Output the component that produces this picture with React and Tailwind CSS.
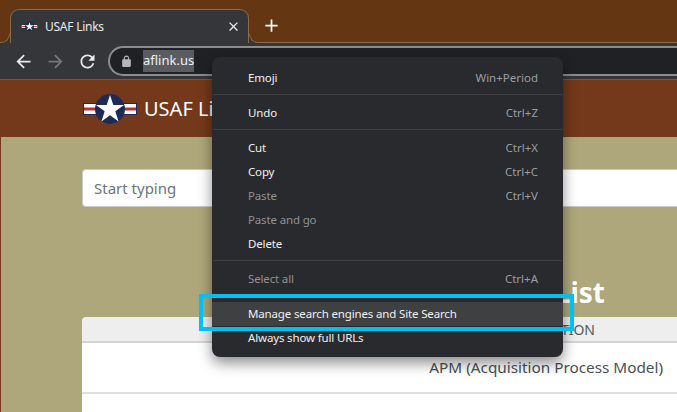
const font = { fontFamily: '"Noto Sans", "Open Sans", sans-serif' };

function Roundel({ className }) {
  return (
    <svg viewBox="0 0 54 30" className={className}>
      <rect x="0" y="9" width="54" height="12" fill="#1f2a56" />
      <rect x="1" y="10" width="52" height="10" fill="#ffffff" />
      <rect x="1" y="13.5" width="52" height="3" fill="#b5322e" />
      <circle cx="27" cy="15" r="15" fill="#1f2a56" />
      <polygon
        fill="#ffffff"
        points="27,1 30.3,11 41,11 32.3,17.3 35.6,27.5 27,21.2 18.4,27.5 21.7,17.3 13,11 23.7,11"
      />
    </svg>
  );
}

function Icon({ d, className }) {
  return (
    <svg viewBox="0 0 24 24" className={className} fill="currentColor">
      <path d={d} />
    </svg>
  );
}

const BACK = "M20 11H7.83l5.59-5.59L12 4l-8 8 8 8 1.41-1.41L7.83 13H20v-2z";
const FORWARD = "M4 11h12.17l-5.59-5.59L12 4l8 8-8 8-1.41-1.41L16.17 13H4v-2z";
const RELOAD =
  "M17.65 6.35A7.958 7.958 0 0 0 12 4c-4.42 0-7.99 3.58-7.99 8s3.57 8 7.99 8c3.73 0 6.84-2.55 7.73-6h-2.08A5.99 5.99 0 0 1 12 18c-3.31 0-6-2.69-6-6s2.69-6 6-6c1.66 0 3.14.69 4.22 1.78L13 11h7V4l-2.35 2.35z";
const LOCK =
  "M18 8h-1V6c0-2.76-2.24-5-5-5S7 3.24 7 6v2H6c-1.1 0-2 .9-2 2v10c0 1.1.9 2 2 2h12c1.1 0 2-.9 2-2V10c0-1.1-.9-2-2-2zM9 6c0-1.66 1.34-3 3-3s3 1.34 3 3v2H9V6z";
const CLOSE =
  "M19 6.41 17.59 5 12 10.59 6.41 5 5 6.41 10.59 12 5 17.59 6.41 19 12 13.41 17.59 19 19 17.59 13.41 12z";
const PLUS = "M19 13h-6v6h-2v-6H5v-2h6V5h2v6h6v2z";

function Item({ label, shortcut, dim, hover }) {
  return (
    <div
      className={
        "flex h-6 items-center justify-between pl-9 pr-[25px] text-[11.5px] " +
        (hover ? "bg-[#3f4042] " : "")
      }
    >
      <span className={"tracking-[-0.15px] " + (dim ? "text-[#8f9194]" : "text-[#eef0f2]")}>
        {label}
      </span>
      {shortcut ? <span className="text-[#9a9ea3]">{shortcut}</span> : null}
    </div>
  );
}

function Sep() {
  return <div className="mx-[1px] mb-[6px] mt-[4px] h-px bg-[#3f4043]" />;
}

export default function App() {
  return (
    <div className="relative h-[412px] w-[677px] overflow-hidden bg-[#aea77b]" style={font}>
      {/* Tab strip */}
      <div className="flex h-[43px] items-end border-b border-[#8a6a48] bg-[#643612] pl-[10px]">
        <div className="relative -mb-px flex h-[34px] w-[239px] items-center rounded-t-[9px] border border-b-0 border-[#8a6a48] bg-[#35363a] pl-[10px] pr-[7px]">
          <div className="absolute -left-[11px] bottom-0 h-[9px] w-[10px] bg-[#35363a]">
            <div className="h-full w-full rounded-br-[9px] border-b border-r border-[#8a6a48] bg-[#643612]" />
          </div>
          <div className="absolute -right-[11px] bottom-0 h-[9px] w-[10px] bg-[#35363a]">
            <div className="h-full w-full rounded-bl-[9px] border-b border-l border-[#8a6a48] bg-[#643612]" />
          </div>
          <Roundel className="h-[9px] w-[17px] shrink-0" />
          <span className="ml-[7px] text-[12px] tracking-[-0.25px] text-[#e8eaed]">USAF Links</span>
          <Icon d={CLOSE} className="ml-auto h-[15px] w-[15px] text-[#e8eaed]" />
        </div>
        <div className="mb-[6px] ml-[12px] flex h-[21px] w-[21px] items-center justify-center text-white">
          <Icon d={PLUS} className="h-[21px] w-[21px]" />
        </div>
      </div>

      {/* Toolbar */}
      <div className="flex h-[37px] items-center border-b border-[#6d5a48] bg-[#35363a] pl-[13px]">
        <Icon d={BACK} className="h-[21px] w-[21px] text-[#e8eaed]" />
        <Icon d={FORWARD} className="ml-[11px] h-[21px] w-[21px] text-[#75777b]" />
        <Icon d={RELOAD} className="ml-[11px] h-[21px] w-[21px] text-[#e8eaed]" />
        <div className="ml-[10px] flex h-[30px] flex-1 items-center rounded-l-full border-2 border-r-0 border-[#8a8c90] bg-[#202124] pl-[10px]">
          <Icon d={LOCK} className="h-[13px] w-[13px] text-[#b5b7ba]" />
          <span className="ml-[10px] flex h-[22px] items-center bg-[#5a5c60] text-[13px] text-[#eef0f2]">
            aflink.us
          </span>
        </div>
      </div>

      {/* Site header */}
      <div className="flex h-[57px] items-center bg-[#74391b] pl-[83px]">
        <Roundel className="h-[30px] w-[54px] shrink-0" />
        <span className="ml-[7px] text-[20px] text-white">USAF Links</span>
      </div>

      {/* Page body */}
      <div className="border-l border-[#74391b] pl-[81px] pt-[32px]">
        <div className="flex h-[38px] items-center rounded-l border border-r-0 border-[#c9c9c9] bg-white pl-[11px] pt-px text-[15px] text-[#6c757d]">
          Start typing
        </div>
        <div className="flex h-[110px] items-end justify-end pb-[11px] pr-[72px] text-[28px] font-bold leading-none text-white">
          Link List
        </div>
        <div className="flex h-[26px] items-center justify-end rounded-tl border-b-2 border-[#d4d4d4] bg-[#eeeeee] pr-[82px] text-[14px] text-[#555b61]">
          DESCRIPTION
        </div>
        <div className="flex h-[51px] items-center justify-end border-b-2 border-[#dfdfdf] bg-white pr-[14px] text-[15.3px] text-[#495057]">
          APM (Acquisition Process Model)
        </div>
        <div className="h-[40px] bg-white" />
      </div>

      {/* Context menu */}
      <div className="absolute left-[212px] top-[57px] w-[351px] rounded-lg bg-[#292a2d] pb-[7px] pt-[9px] shadow-[0_6px_14px_rgba(0,0,0,0.45)]">
        <Item label="Emoji" shortcut="Win+Period" />
        <Sep />
        <Item label="Undo" shortcut="Ctrl+Z" />
        <Sep />
        <Item label="Cut" shortcut="Ctrl+X" />
        <Item label="Copy" shortcut="Ctrl+C" />
        <Item label="Paste" shortcut="Ctrl+V" dim />
        <Item label="Paste and go" dim />
        <Item label="Delete" />
        <Sep />
        <Item label="Select all" shortcut="Ctrl+A" dim />
        <Sep />
        <Item label="Manage search engines and Site Search" hover />
        <Item label="Always show full URLs" />
      </div>

      {/* Annotation box */}
      <div className="absolute left-[199px] top-[294px] h-[37px] w-[375px] border-4 border-[#00bff3]" />
    </div>
  );
}
